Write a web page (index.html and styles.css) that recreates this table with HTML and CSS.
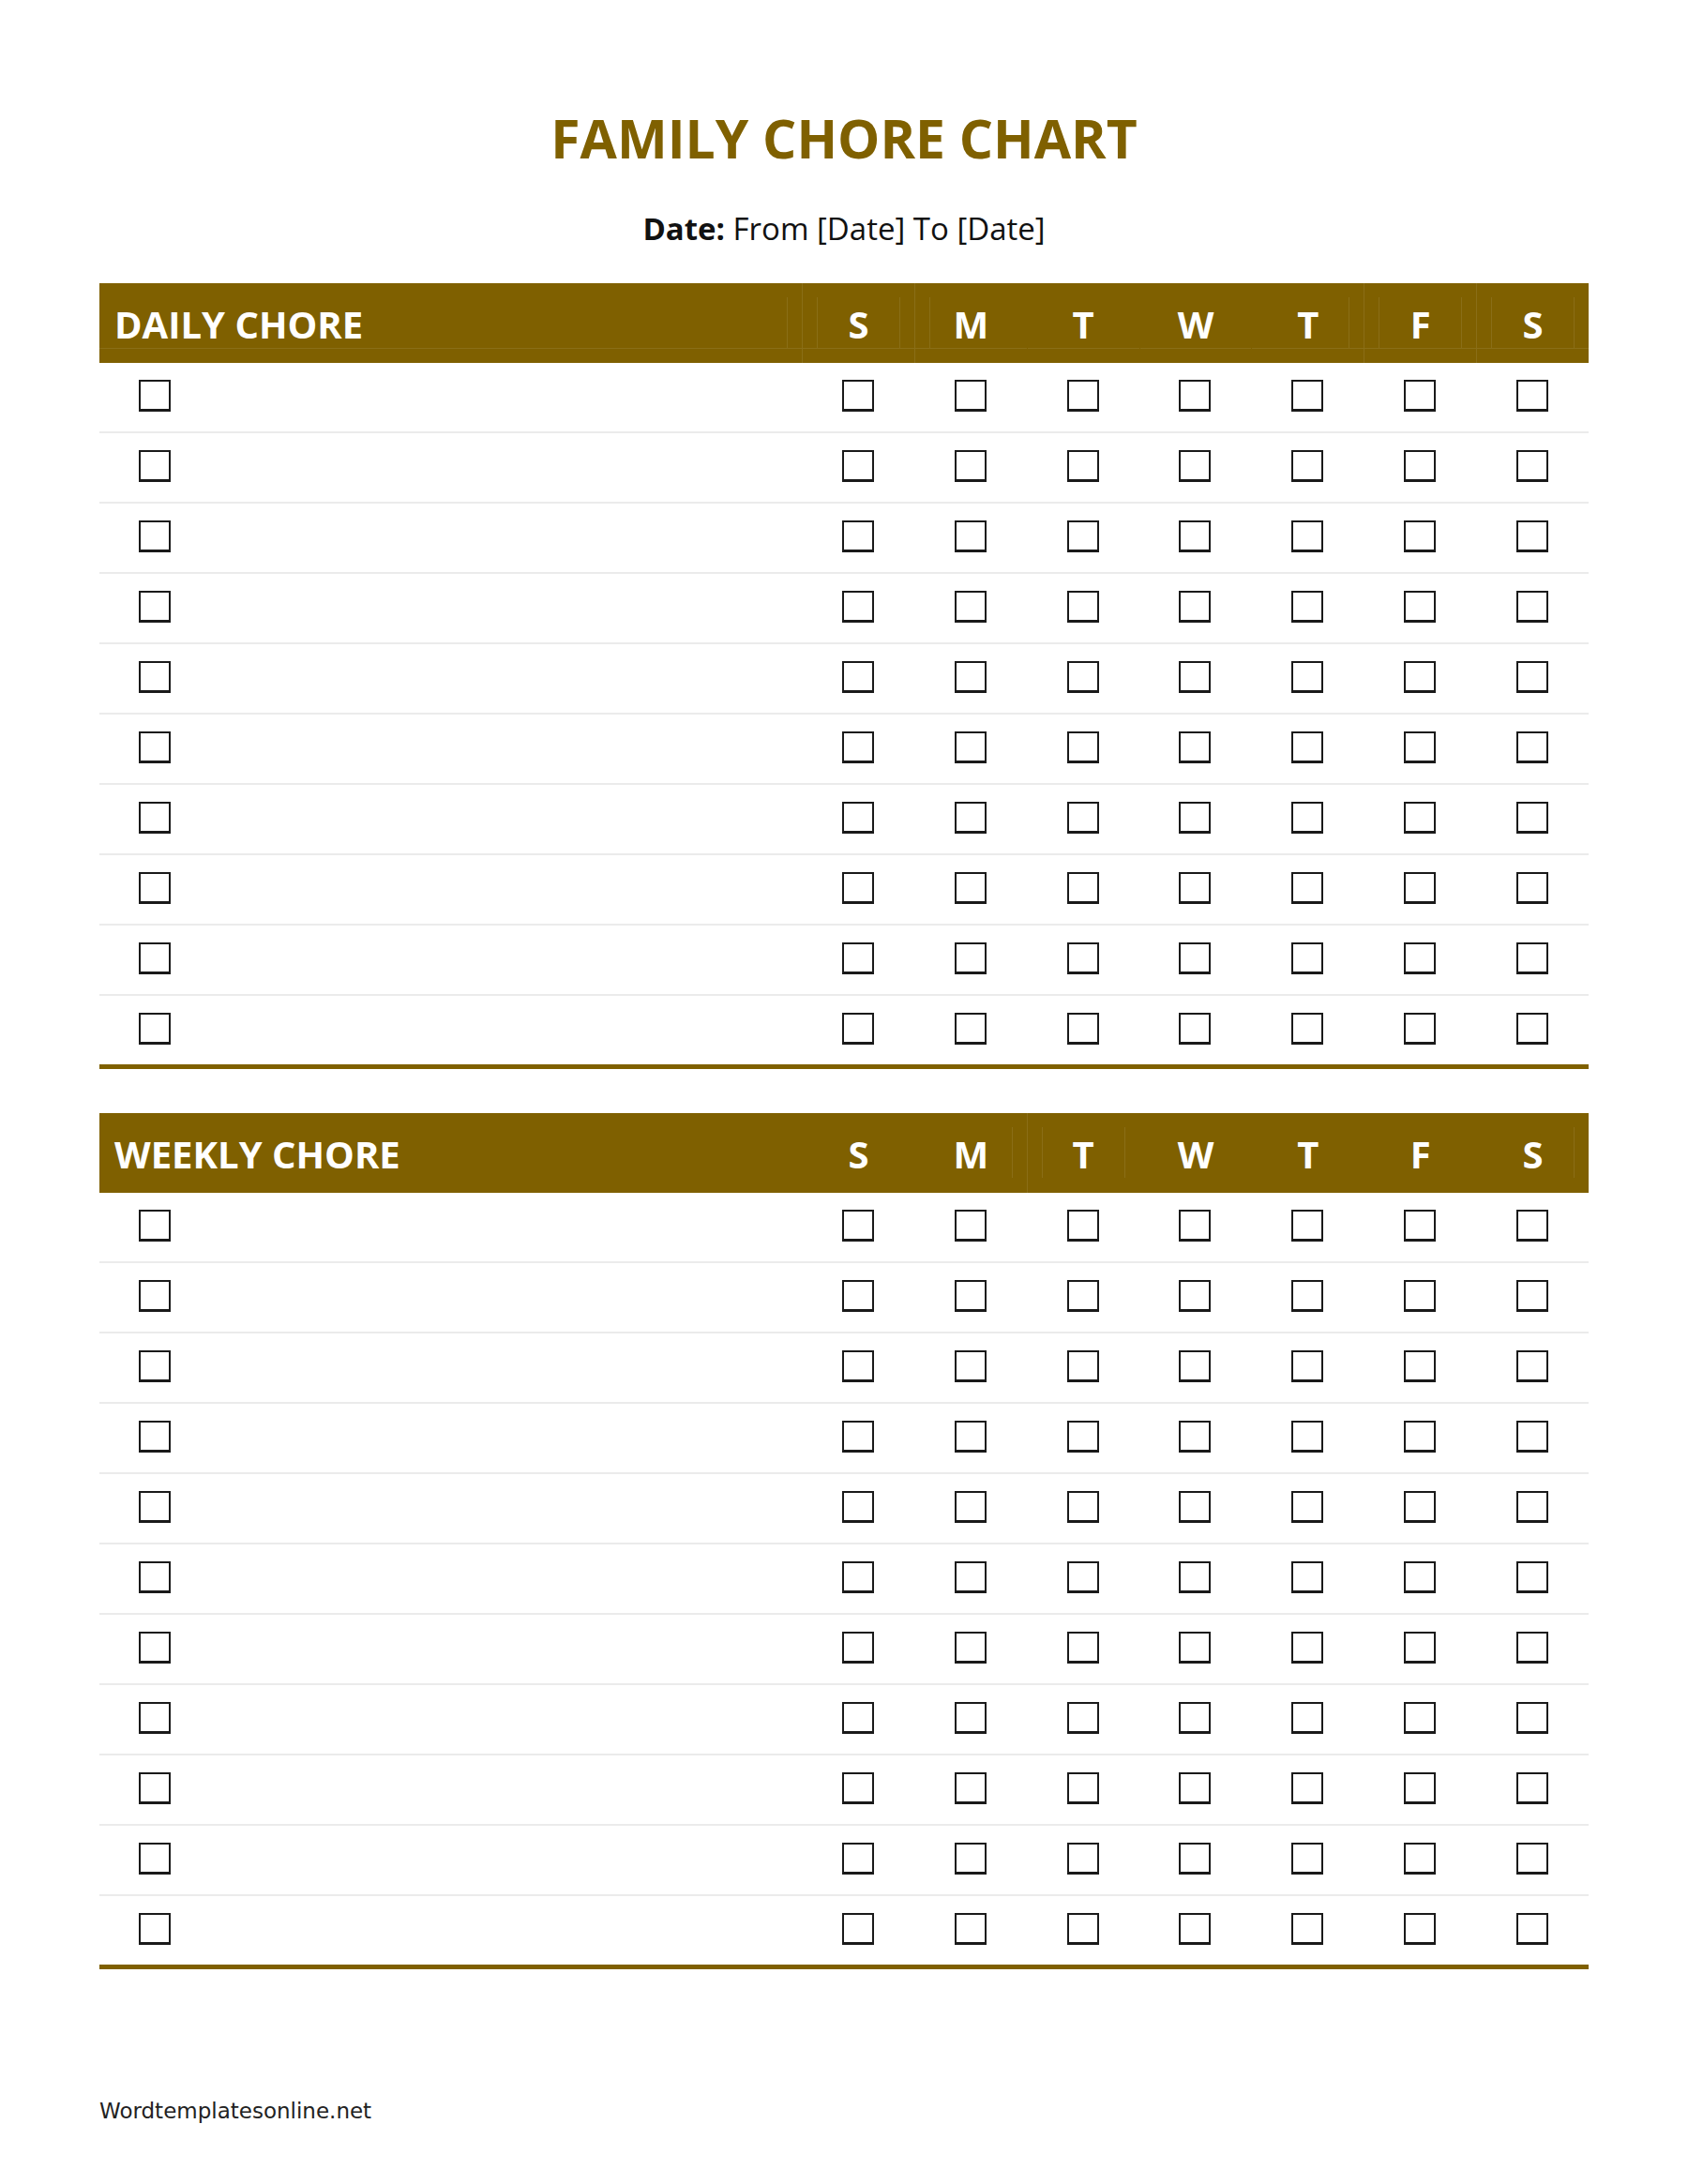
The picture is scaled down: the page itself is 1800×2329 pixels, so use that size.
FILE: index.html
```html
<!DOCTYPE html>
<html lang="en">
<head>
<meta charset="utf-8">
<title>Family Chore Chart</title>
<link rel="stylesheet" href="styles.css">
</head>
<body>
<div class="page">
  <h1 class="title">FAMILY CHORE CHART</h1>
  <p class="date"><b>Date:</b> From [Date] To [Date]</p>

  <section class="chart daily">
    <div class="head with-line">
      <div class="hc task"><div class="hr"><div class="hl ir">DAILY CHORE</div></div></div>
      <div class="hc fl"><div class="hr"><div class="hl il ir">S</div></div></div>
      <div class="hc fl"><div class="hr"><div class="hl il">M</div></div></div>
      <div class="hc"><div class="hr"><div class="hl">T</div></div></div>
      <div class="hc"><div class="hr"><div class="hl">W</div></div></div>
      <div class="hc"><div class="hr"><div class="hl ir">T</div></div></div>
      <div class="hc fl"><div class="hr"><div class="hl il ir">F</div></div></div>
      <div class="hc fl"><div class="hr"><div class="hl il ir">S</div></div></div>
    </div>
    <div class="row"><div class="c task"><span class="box"></span></div><div class="c"><span class="box"></span></div><div class="c"><span class="box"></span></div><div class="c"><span class="box"></span></div><div class="c"><span class="box"></span></div><div class="c"><span class="box"></span></div><div class="c"><span class="box"></span></div><div class="c"><span class="box"></span></div></div>
    <div class="row"><div class="c task"><span class="box"></span></div><div class="c"><span class="box"></span></div><div class="c"><span class="box"></span></div><div class="c"><span class="box"></span></div><div class="c"><span class="box"></span></div><div class="c"><span class="box"></span></div><div class="c"><span class="box"></span></div><div class="c"><span class="box"></span></div></div>
    <div class="row"><div class="c task"><span class="box"></span></div><div class="c"><span class="box"></span></div><div class="c"><span class="box"></span></div><div class="c"><span class="box"></span></div><div class="c"><span class="box"></span></div><div class="c"><span class="box"></span></div><div class="c"><span class="box"></span></div><div class="c"><span class="box"></span></div></div>
    <div class="row"><div class="c task"><span class="box"></span></div><div class="c"><span class="box"></span></div><div class="c"><span class="box"></span></div><div class="c"><span class="box"></span></div><div class="c"><span class="box"></span></div><div class="c"><span class="box"></span></div><div class="c"><span class="box"></span></div><div class="c"><span class="box"></span></div></div>
    <div class="row"><div class="c task"><span class="box"></span></div><div class="c"><span class="box"></span></div><div class="c"><span class="box"></span></div><div class="c"><span class="box"></span></div><div class="c"><span class="box"></span></div><div class="c"><span class="box"></span></div><div class="c"><span class="box"></span></div><div class="c"><span class="box"></span></div></div>
    <div class="row"><div class="c task"><span class="box"></span></div><div class="c"><span class="box"></span></div><div class="c"><span class="box"></span></div><div class="c"><span class="box"></span></div><div class="c"><span class="box"></span></div><div class="c"><span class="box"></span></div><div class="c"><span class="box"></span></div><div class="c"><span class="box"></span></div></div>
    <div class="row"><div class="c task"><span class="box"></span></div><div class="c"><span class="box"></span></div><div class="c"><span class="box"></span></div><div class="c"><span class="box"></span></div><div class="c"><span class="box"></span></div><div class="c"><span class="box"></span></div><div class="c"><span class="box"></span></div><div class="c"><span class="box"></span></div></div>
    <div class="row"><div class="c task"><span class="box"></span></div><div class="c"><span class="box"></span></div><div class="c"><span class="box"></span></div><div class="c"><span class="box"></span></div><div class="c"><span class="box"></span></div><div class="c"><span class="box"></span></div><div class="c"><span class="box"></span></div><div class="c"><span class="box"></span></div></div>
    <div class="row"><div class="c task"><span class="box"></span></div><div class="c"><span class="box"></span></div><div class="c"><span class="box"></span></div><div class="c"><span class="box"></span></div><div class="c"><span class="box"></span></div><div class="c"><span class="box"></span></div><div class="c"><span class="box"></span></div><div class="c"><span class="box"></span></div></div>
    <div class="row"><div class="c task"><span class="box"></span></div><div class="c"><span class="box"></span></div><div class="c"><span class="box"></span></div><div class="c"><span class="box"></span></div><div class="c"><span class="box"></span></div><div class="c"><span class="box"></span></div><div class="c"><span class="box"></span></div><div class="c"><span class="box"></span></div></div>
  </section>

  <section class="chart weekly">
    <div class="head">
      <div class="hc task"><div class="hr"><div class="hl">WEEKLY CHORE</div></div></div>
      <div class="hc"><div class="hr"><div class="hl">S</div></div></div>
      <div class="hc"><div class="hr"><div class="hl ir">M</div></div></div>
      <div class="hc fl"><div class="hr"><div class="hl il ir">T</div></div></div>
      <div class="hc"><div class="hr"><div class="hl">W</div></div></div>
      <div class="hc"><div class="hr"><div class="hl">T</div></div></div>
      <div class="hc"><div class="hr"><div class="hl">F</div></div></div>
      <div class="hc"><div class="hr"><div class="hl ir">S</div></div></div>
    </div>
    <div class="row"><div class="c task"><span class="box"></span></div><div class="c"><span class="box"></span></div><div class="c"><span class="box"></span></div><div class="c"><span class="box"></span></div><div class="c"><span class="box"></span></div><div class="c"><span class="box"></span></div><div class="c"><span class="box"></span></div><div class="c"><span class="box"></span></div></div>
    <div class="row"><div class="c task"><span class="box"></span></div><div class="c"><span class="box"></span></div><div class="c"><span class="box"></span></div><div class="c"><span class="box"></span></div><div class="c"><span class="box"></span></div><div class="c"><span class="box"></span></div><div class="c"><span class="box"></span></div><div class="c"><span class="box"></span></div></div>
    <div class="row"><div class="c task"><span class="box"></span></div><div class="c"><span class="box"></span></div><div class="c"><span class="box"></span></div><div class="c"><span class="box"></span></div><div class="c"><span class="box"></span></div><div class="c"><span class="box"></span></div><div class="c"><span class="box"></span></div><div class="c"><span class="box"></span></div></div>
    <div class="row"><div class="c task"><span class="box"></span></div><div class="c"><span class="box"></span></div><div class="c"><span class="box"></span></div><div class="c"><span class="box"></span></div><div class="c"><span class="box"></span></div><div class="c"><span class="box"></span></div><div class="c"><span class="box"></span></div><div class="c"><span class="box"></span></div></div>
    <div class="row"><div class="c task"><span class="box"></span></div><div class="c"><span class="box"></span></div><div class="c"><span class="box"></span></div><div class="c"><span class="box"></span></div><div class="c"><span class="box"></span></div><div class="c"><span class="box"></span></div><div class="c"><span class="box"></span></div><div class="c"><span class="box"></span></div></div>
    <div class="row"><div class="c task"><span class="box"></span></div><div class="c"><span class="box"></span></div><div class="c"><span class="box"></span></div><div class="c"><span class="box"></span></div><div class="c"><span class="box"></span></div><div class="c"><span class="box"></span></div><div class="c"><span class="box"></span></div><div class="c"><span class="box"></span></div></div>
    <div class="row"><div class="c task"><span class="box"></span></div><div class="c"><span class="box"></span></div><div class="c"><span class="box"></span></div><div class="c"><span class="box"></span></div><div class="c"><span class="box"></span></div><div class="c"><span class="box"></span></div><div class="c"><span class="box"></span></div><div class="c"><span class="box"></span></div></div>
    <div class="row"><div class="c task"><span class="box"></span></div><div class="c"><span class="box"></span></div><div class="c"><span class="box"></span></div><div class="c"><span class="box"></span></div><div class="c"><span class="box"></span></div><div class="c"><span class="box"></span></div><div class="c"><span class="box"></span></div><div class="c"><span class="box"></span></div></div>
    <div class="row"><div class="c task"><span class="box"></span></div><div class="c"><span class="box"></span></div><div class="c"><span class="box"></span></div><div class="c"><span class="box"></span></div><div class="c"><span class="box"></span></div><div class="c"><span class="box"></span></div><div class="c"><span class="box"></span></div><div class="c"><span class="box"></span></div></div>
    <div class="row"><div class="c task"><span class="box"></span></div><div class="c"><span class="box"></span></div><div class="c"><span class="box"></span></div><div class="c"><span class="box"></span></div><div class="c"><span class="box"></span></div><div class="c"><span class="box"></span></div><div class="c"><span class="box"></span></div><div class="c"><span class="box"></span></div></div>
    <div class="row"><div class="c task"><span class="box"></span></div><div class="c"><span class="box"></span></div><div class="c"><span class="box"></span></div><div class="c"><span class="box"></span></div><div class="c"><span class="box"></span></div><div class="c"><span class="box"></span></div><div class="c"><span class="box"></span></div><div class="c"><span class="box"></span></div></div>
  </section>

  <p class="footer">Wordtemplatesonline.net</p>
</div>
</body>
</html>
```
FILE: styles.css
```css
* {
  box-sizing: border-box;
}

html,
body {
  margin: 0;
  padding: 0;
  background: #ffffff;
}

body {
  font-family: "Open Sans", "Liberation Sans", sans-serif;
  color: #111111;
}

.page {
  width: 1800px;
  min-height: 2329px;
  padding: 108px 106px 0;
}

.title {
  margin: 0;
  text-align: center;
  font-size: 57px;
  font-weight: 700;
  line-height: 78px;
  color: #7f6000;
}

.date {
  margin: 36px 0 0;
  text-align: center;
  font-size: 33px;
  line-height: 44px;
  color: #111111;
}

.date b {
  font-weight: 700;
}

.chart {
  margin-top: 36px;
}

.chart.weekly {
  margin-top: 47px;
}

.head,
.row {
  display: grid;
  grid-template-columns: 749px repeat(7, 1fr);
}

.head {
  height: 85px;
  background: #7f6000;
  color: #ffffff;
  font-size: 40px;
  font-weight: 700;
}

.hc {
  border-left: 1px solid transparent;
}

.hc.task {
  border-left: 0;
}

.hc.fl {
  border-left-color: rgba(255, 255, 255, 0.09);
}

.hr {
  margin-top: 15px;
  height: 55px;
  border-bottom: 1px solid transparent;
}

.with-line .hr {
  border-bottom-color: rgba(255, 255, 255, 0.09);
}

.hl {
  height: 100%;
  margin: 0 15px;
  padding-top: 3px;
  display: flex;
  align-items: center;
  justify-content: center;
  border-left: 1px solid transparent;
  border-right: 1px solid transparent;
  line-height: 54px;
}

.hl.il {
  border-left-color: rgba(255, 255, 255, 0.09);
}

.hl.ir {
  border-right-color: rgba(255, 255, 255, 0.09);
}

.task .hl {
  justify-content: flex-start;
  margin-left: 0;
  padding-left: 15px;
}

.row {
  height: 75px;
  border-bottom: 2px solid #ebebeb;
}

.row:last-child {
  height: 78px;
  border-bottom: 5px solid #7f6000;
}

.c {
  display: flex;
  align-items: center;
  justify-content: center;
  padding-bottom: 3px;
}

.c.task {
  justify-content: flex-start;
  padding-left: 42px;
}

.box {
  display: block;
  width: 34px;
  height: 34px;
  border: 2px solid #1a1a1a;
  border-bottom-width: 3px;
  background: #ffffff;
}

.footer {
  margin: 135px 0 0;
  font-family: "DejaVu Sans", "Liberation Sans", sans-serif;
  font-size: 23px;
  line-height: 32px;
  color: #222222;
}
```
